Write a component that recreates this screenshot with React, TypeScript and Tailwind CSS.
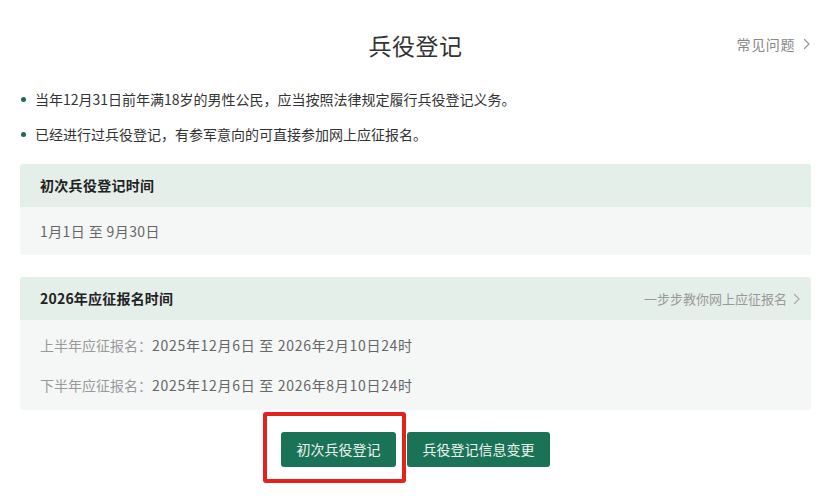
import React from "react";

function Chevron({ className = "" }: { className?: string }) {
  return (
    <svg className={className} width="8" height="12" viewBox="0 0 8 12" fill="none">
      <path d="M1.5 1.5 L6 6 L1.5 10.5" stroke="currentColor" strokeWidth="1.2" strokeLinecap="round" strokeLinejoin="round" />
    </svg>
  );
}

export default function App() {
  return (
    <div
      className="w-[831px] h-[501px] bg-white overflow-hidden px-5 text-[14px] text-[#333]"
      style={{ fontFamily: '"Noto Sans CJK SC", "Noto Sans", sans-serif' }}
    >
      <div className="relative pt-[29px] flex justify-center">
        <h1 className="text-[23px] leading-[32px] font-normal text-[#333] tracking-[0.5px]">兵役登记</h1>
        <div className="absolute right-0 top-[32px] flex items-center gap-[8px] text-[14px] leading-[24px] text-[#888]">
          <span className="tracking-[0.6px]">常见问题</span>
          <Chevron className="text-[#999]" />
        </div>
      </div>

      <ul className="mt-[21px]">
        <li className="flex items-center leading-[35px]">
          <span className="w-[5px] h-[5px] rounded-full bg-[#1d6b50] ml-[1px] mr-[9px]"></span>
          <span>当年12月31日前年满18岁的男性公民，应当按照法律规定履行兵役登记义务。</span>
        </li>
        <li className="flex items-center leading-[35px]">
          <span className="w-[5px] h-[5px] rounded-full bg-[#1d6b50] ml-[1px] mr-[9px]"></span>
          <span>已经进行过兵役登记，有参军意向的可直接参加网上应征报名。</span>
        </li>
      </ul>

      <div className="mt-[12px] rounded-[3px] overflow-hidden">
        <div className="h-[43px] bg-[#e4efea] flex items-center px-5 font-bold text-[#222] tracking-[0.3px]">初次兵役登记时间</div>
        <div className="h-[48px] bg-[#f5f7f6] flex items-center px-5 text-[#666] tracking-[0.4px]">1月1日 至 9月30日</div>
      </div>

      <div className="mt-[22px] rounded-[3px] overflow-hidden">
        <div className="h-[43px] bg-[#e4efea] flex items-center justify-between pl-5 pr-[10px]">
          <span className="font-bold text-[#222] tracking-[0.2px]">2026年应征报名时间</span>
          <span className="flex items-center gap-[6px] text-[13px] text-[#999]">
            一步步教你网上应征报名
            <Chevron className="text-[#aaa]" />
          </span>
        </div>
        <div className="bg-[#f5f7f6] px-5 py-[5px]">
          <div className="leading-[40px]">
            <span className="text-[#999]">上半年应征报名：</span>
            <span className="text-[#666] tracking-[0.7px]">2025年12月6日 至 2026年2月10日24时</span>
          </div>
          <div className="leading-[40px]">
            <span className="text-[#999]">下半年应征报名：</span>
            <span className="text-[#666] tracking-[0.7px]">2025年12月6日 至 2026年8月10日24时</span>
          </div>
        </div>
      </div>

      <div className="mt-[22px] flex justify-center gap-[11px]">
        <div className="relative">
          <button className="h-[35px] px-[15.5px] rounded-[3px] bg-[#1b7357] text-[#eef5f1] text-[14px] leading-[35px]">
            初次兵役登记
          </button>
          <div className="absolute left-[-18px] top-[-20px] w-[143px] h-[71px] border-[4px] border-[#e3211d] rounded-[3px] pointer-events-none"></div>
        </div>
        <button className="h-[35px] px-[15.5px] rounded-[3px] bg-[#1b7357] text-[#eef5f1] text-[14px] leading-[35px]">
          兵役登记信息变更
        </button>
      </div>
    </div>
  );
}
